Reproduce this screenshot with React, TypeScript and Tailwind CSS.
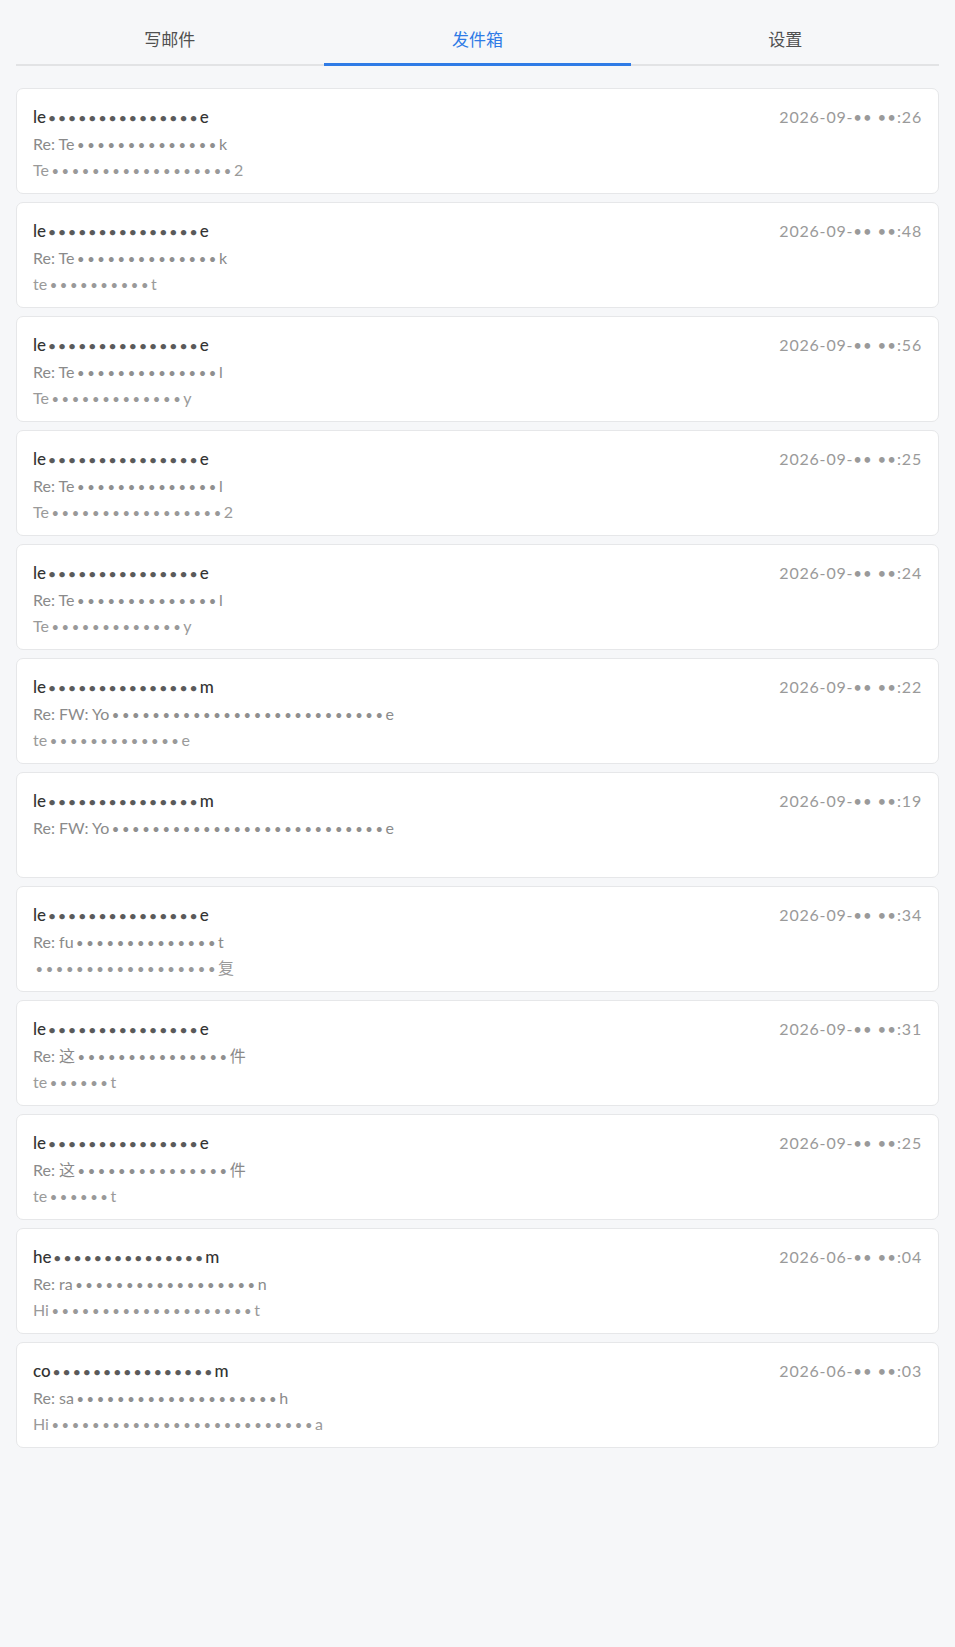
import React from "react";

type Mail = {
  to: [string, number, string];
  subject: [string, number, string];
  preview: [string, number, string] | null;
  date: string;
};

const mails: Mail[] = [
  { to: ["le", 15, "e"], subject: ["Re: Te", 14, "k"], preview: ["Te", 18, "2"], date: "26" },
  { to: ["le", 15, "e"], subject: ["Re: Te", 14, "k"], preview: ["te", 10, "t"], date: "48" },
  { to: ["le", 15, "e"], subject: ["Re: Te", 14, "l"], preview: ["Te", 13, "y"], date: "56" },
  { to: ["le", 15, "e"], subject: ["Re: Te", 14, "l"], preview: ["Te", 17, "2"], date: "25" },
  { to: ["le", 15, "e"], subject: ["Re: Te", 14, "l"], preview: ["Te", 13, "y"], date: "24" },
  { to: ["le", 15, "m"], subject: ["Re: FW: Yo", 27, "e"], preview: ["te", 13, "e"], date: "22" },
  { to: ["le", 15, "m"], subject: ["Re: FW: Yo", 27, "e"], preview: null, date: "19" },
  { to: ["le", 15, "e"], subject: ["Re: fu", 14, "t"], preview: ["", 18, "复"], date: "34" },
  { to: ["le", 15, "e"], subject: ["Re: 这", 15, "件"], preview: ["te", 6, "t"], date: "31" },
  { to: ["le", 15, "e"], subject: ["Re: 这", 15, "件"], preview: ["te", 6, "t"], date: "25" },
  { to: ["he", 15, "m"], subject: ["Re: ra", 18, "n"], preview: ["Hi", 20, "t"], date: "04" },
  { to: ["co", 16, "m"], subject: ["Re: sa", 20, "h"], preview: ["Hi", 26, "a"], date: "03" },
];

const months: Record<number, string> = { 10: "06", 11: "06" };

const tabs = ["写邮件", "发件箱", "设置"];

function Masked({ parts, dotClass }: { parts: [string, number, string]; dotClass: string }) {
  return (
    <>
      {parts[0]}
      <span className={dotClass}>{"•".repeat(parts[1])}</span>
      {parts[2]}
    </>
  );
}

function Tabs() {
  return (
    <div className="flex border-b-2 border-[#e2e3e5]">
      {tabs.map((t, i) => (
        <div
          key={t}
          className={
            i === 1
              ? "flex-1 -mb-[2px] border-b-[3px] border-[#2f7be6] pb-[11px] text-center text-[17px] leading-[24px] text-[#2f7be6]"
              : "flex-1 -mb-[2px] border-b-[3px] border-transparent pb-[11px] text-center text-[17px] leading-[24px] text-[#505050]"
          }
        >
          {t}
        </div>
      ))}
    </div>
  );
}

function MailCard({ mail, month }: { mail: Mail; month: string }) {
  return (
    <div className="rounded-[7px] border border-[#e6e7e9] bg-white px-4 pt-[15px] pb-[10px]">
      <div className="flex items-start justify-between">
        <div className="text-[17px] leading-[26px] font-medium text-[#333]">
          <Masked parts={mail.to} dotClass="ml-[1.8px] text-[14px] leading-none tracking-[2px] text-[#5a5a5a]" />
        </div>
        <div className="text-[16px] leading-[26px] text-[#9a9a9a] tracking-[0.8px]">
          2026-{month}-<span className="text-[15px] leading-none tracking-[1px]">••</span>{" "}
          <span className="text-[15px] leading-none tracking-[1px]">••</span>:{mail.date}
        </div>
      </div>
      <div className="text-[16px] leading-[27px] text-[#8a8a8a]">
        <Masked parts={mail.subject} dotClass="ml-[2.5px] text-[13px] leading-none tracking-[2.6px] text-[#8f8f8f]" />
      </div>
      <div className="h-[26px] text-[16px] leading-[26px] text-[#9a9a9a]">
        {mail.preview && (
          <Masked parts={mail.preview} dotClass="ml-[2.5px] text-[13px] leading-none tracking-[2.6px] text-[#999]" />
        )}
      </div>
    </div>
  );
}

export default function App() {
  return (
    <div
      className="min-h-[1647px] bg-[#f6f7f9] px-4 pt-[28px]"
      style={{ fontFamily: 'Lato, "Noto Sans CJK SC", sans-serif' }}
    >
      <Tabs />
      <div className="mt-[22px] flex flex-col gap-[8px]">
        {mails.map((m, i) => (
          <MailCard key={i} mail={m} month={months[i] ?? "09"} />
        ))}
      </div>
    </div>
  );
}
